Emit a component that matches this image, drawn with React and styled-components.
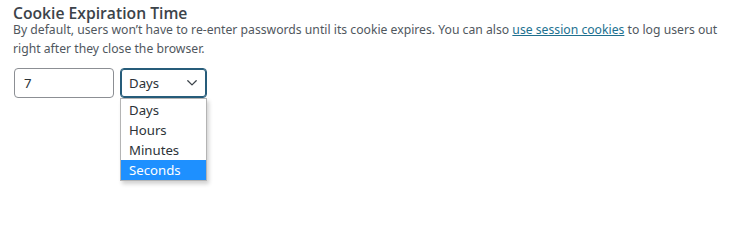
import React from "react";
import styled, { createGlobalStyle } from "styled-components";

const Global = createGlobalStyle`
  html, body { margin: 0; padding: 0; background: #fff; }
  html, body, #root { height: 100%; }
  body { font-family: "Noto Sans", "Open Sans", sans-serif; }
`;

const Wrap = styled.div`
  box-sizing: border-box;
  min-height: 100%;
  padding: 6px 13px 0 13px;
`;

const Title = styled.h2`
  margin: 0;
  font-family: "Open Sans", "Noto Sans", sans-serif;
  font-size: 15.7px;
  line-height: 14px;
  font-weight: 600;
  color: #3c434a;
`;

const Desc = styled.p`
  margin: 0;
  font-family: "Noto Sans", "Open Sans", sans-serif;
  font-size: 12.2px;
  line-height: 19px;
  color: #50575e;
`;

const Link = styled.a`
  color: #20708f;
  text-decoration: underline;
`;

const Row = styled.div`
  display: flex;
  gap: 6px;
  margin-top: 10px;
  align-items: flex-start;
`;

const Input = styled.input`
  box-sizing: border-box;
  width: 100px;
  height: 30px;
  margin: 0 0 0 1px;
  padding: 0 9px;
  border: 1px solid #8c8f94;
  border-radius: 4px;
  font-family: "Noto Sans", sans-serif;
  font-size: 13.2px;
  color: #2c3338;
  background: #fff;
  outline: none;
`;

const SelectWrap = styled.div`
  position: relative;
  width: 87px;
`;

const SelectBox = styled.div`
  box-sizing: border-box;
  height: 30px;
  display: flex;
  align-items: center;
  justify-content: space-between;
  padding: 0 9px 0 8px;
  border: 1px solid #265c7a;
  box-shadow: 0 0 0 1px #265c7a inset;
  border-radius: 4px;
  font-size: 13.2px;
  color: #2c3338;
  background: #fff;
`;

const Options = styled.ul`
  position: absolute;
  left: 0;
  top: 30px;
  width: 87px;
  box-sizing: border-box;
  margin: 0;
  padding: 1px 0 0 0;
  list-style: none;
  background: #fff;
  border: 1px solid #b4b4b4;
  box-shadow: 2px 3px 4px rgba(0, 0, 0, 0.18);
  z-index: 5;
`;

const Option = styled.li`
  height: 20px;
  line-height: 20px;
  padding-left: 8px;
  font-size: 13.2px;
  color: ${(p) => (p.$active ? "#fff" : "#2c3338")};
  background: ${(p) => (p.$active ? "#1e90ff" : "transparent")};
`;

const Chevron = () => (
  <svg width="10" height="6" viewBox="0 0 10 6" fill="none">
    <path d="M0.8 0.8 L5 4.9 L9.2 0.8" stroke="#3c434a" strokeWidth="1.3" strokeLinecap="round" strokeLinejoin="round" />
  </svg>
);

export default function App() {
  const opts = ["Days", "Hours", "Minutes", "Seconds"];
  return (
    <>
      <Global />
      <Wrap>
        <Title>Cookie Expiration Time</Title>
        <Desc>
          By default, users won’t have to re-enter passwords until its cookie expires. You can also{" "}
          <Link href="#">use session cookies</Link> to log users out right after they close the browser.
        </Desc>
        <Row>
          <Input defaultValue="7" />
          <SelectWrap>
            <SelectBox>
              <span>Days</span>
              <Chevron />
            </SelectBox>
            <Options>
              {opts.map((o) => (
                <Option key={o} $active={o === "Seconds"}>{o}</Option>
              ))}
            </Options>
          </SelectWrap>
        </Row>
      </Wrap>
    </>
  );
}
